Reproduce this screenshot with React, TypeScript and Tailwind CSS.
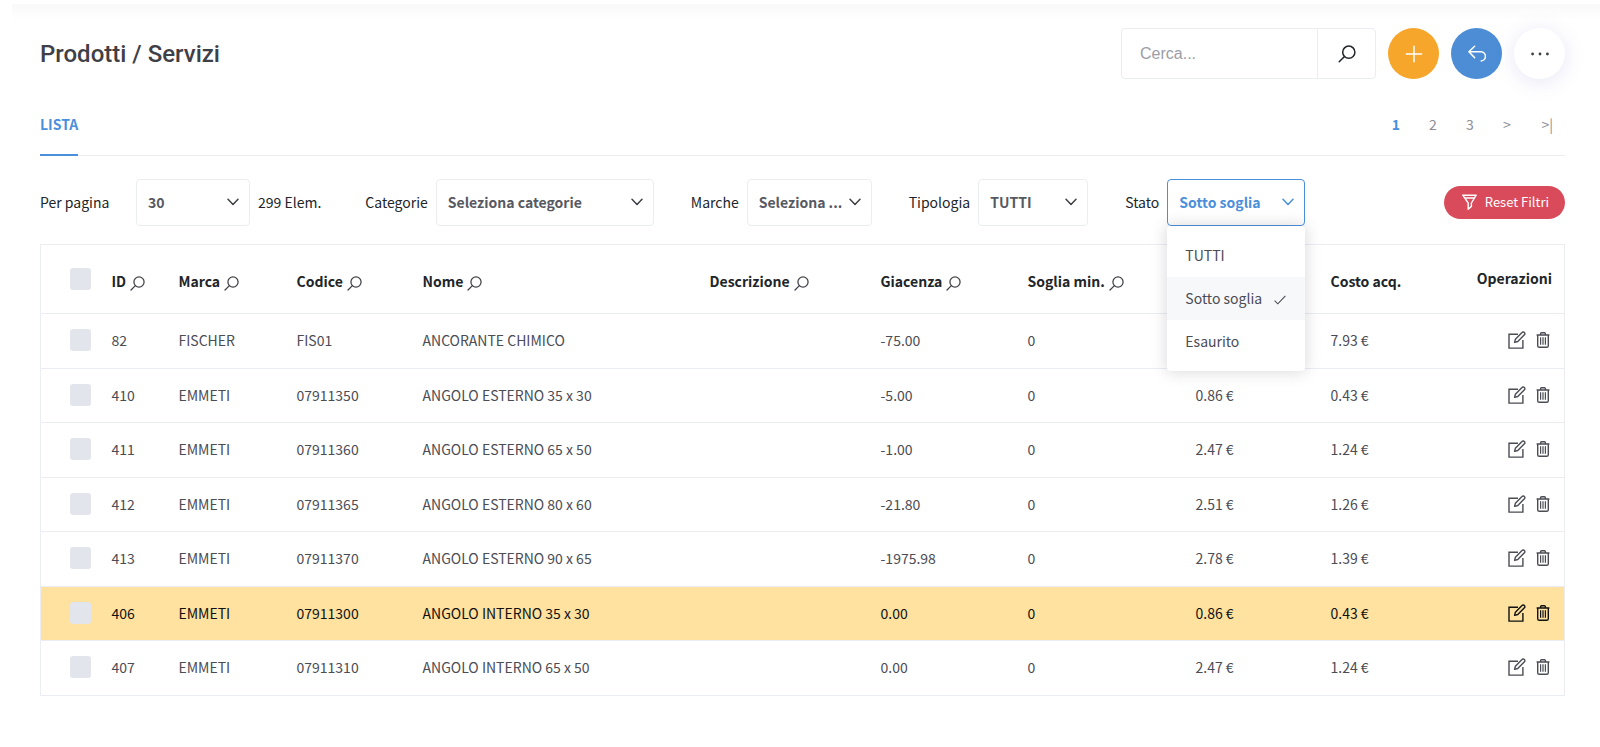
import { useState } from "react";
import type { JSX, ReactNode } from "react";

type Product = {
    id: number;
    brand: string;
    code: string;
    name: string;
    stock: string;
    minStock: string;
    price?: string;
    cost: string;
    highlighted?: boolean;
};

const products: Product[] = [
    { id: 82, brand: "FISCHER", code: "FIS01", name: "ANCORANTE CHIMICO", stock: "-75.00", minStock: "0", cost: "7.93 €" },
    { id: 410, brand: "EMMETI", code: "07911350", name: "ANGOLO ESTERNO 35 x 30", stock: "-5.00", minStock: "0", price: "0.86 €", cost: "0.43 €" },
    { id: 411, brand: "EMMETI", code: "07911360", name: "ANGOLO ESTERNO 65 x 50", stock: "-1.00", minStock: "0", price: "2.47 €", cost: "1.24 €" },
    { id: 412, brand: "EMMETI", code: "07911365", name: "ANGOLO ESTERNO 80 x 60", stock: "-21.80", minStock: "0", price: "2.51 €", cost: "1.26 €" },
    { id: 413, brand: "EMMETI", code: "07911370", name: "ANGOLO ESTERNO 90 x 65", stock: "-1975.98", minStock: "0", price: "2.78 €", cost: "1.39 €" },
    { id: 406, brand: "EMMETI", code: "07911300", name: "ANGOLO INTERNO 35 x 30", stock: "0.00", minStock: "0", price: "0.86 €", cost: "0.43 €", highlighted: true },
    { id: 407, brand: "EMMETI", code: "07911310", name: "ANGOLO INTERNO 65 x 50", stock: "0.00", minStock: "0", price: "2.47 €", cost: "1.24 €" },
];

const stati = ["TUTTI", "Sotto soglia", "Esaurito"];

const SearchIcon = ({ className }: { className: string }): JSX.Element => (
    <svg viewBox="0 0 18 18" className={className} fill="none" stroke="currentColor" strokeWidth="1.5" strokeLinecap="round" aria-hidden="true">
        <circle cx="10.8" cy="7.2" r="6.1" />
        <path d="M6.5 11.5 1.2 16.8" />
    </svg>
);

const ChevronIcon = ({ className }: { className: string }): JSX.Element => (
    <svg viewBox="0 0 12 8" className={className} fill="none" stroke="currentColor" strokeWidth="1.5" strokeLinecap="round" strokeLinejoin="round" aria-hidden="true">
        <path d="M1 1.2 6 6.4l5-5.2" />
    </svg>
);

const EditIcon = (): JSX.Element => (
    <svg viewBox="0 0 18 18" className="size-[18px]" fill="none" stroke="currentColor" strokeWidth="1.4" aria-hidden="true">
        <path d="M10 3.2H1v13.9h13.9V9" />
        <path d="M7.4 8.2 14 1.5a1.6 1.6 0 0 1 2.4 0 1.6 1.6 0 0 1 0 2.3l-6.6 6.7-3.2.9z" strokeLinejoin="round" />
    </svg>
);

const TrashIcon = (): JSX.Element => (
    <svg viewBox="0 0 14 16" className="h-4 w-3.5" fill="none" stroke="currentColor" strokeWidth="1.4" aria-hidden="true">
        <path d="M.6 3h12.8M4.6 3V1.8q0-1 1-1h2.8q1 0 1 1V3M1.7 3v10.7q0 1.6 1.6 1.6h7.4q1.6 0 1.6-1.6V3" />
        <path d="M4.6 5.3v7.5M7 5.3v7.5M9.4 5.3v7.5" strokeWidth="1.2" />
    </svg>
);

type FilterSelectProps = {
    id: string;
    options: string[];
    width: string;
    active?: boolean;
    value?: string;
    onToggle?: () => void;
    children?: ReactNode;
};

const FilterSelect = ({ id, options, width, active, value, onToggle, children }: FilterSelectProps): JSX.Element => (
    <div className={`relative ${width}`}>
        <select
            id={id}
            value={value ?? options[0]}
            onChange={() => undefined}
            onMouseDown={(e) => {
                if (onToggle) {
                    e.preventDefault();
                    onToggle();
                }
            }}
            className={`block h-[47px] w-full appearance-none rounded-sm border bg-white pb-0.5 pl-[11px] pr-6 text-[14px] font-bold outline-none ${active ? "border-[#4a8fdc] text-[#4a8fdc]" : "border-[#ebedf2] text-[#575962]"}`}
        >
            {options.map((option) => (
                <option key={option}>{option}</option>
            ))}
        </select>
        <ChevronIcon className={`pointer-events-none absolute right-[11px] top-[19px] h-2 w-3 ${active ? "text-[#4a8fdc]" : "text-[#3f4047]"}`} />
        {children}
    </div>
);

const HeaderCell = ({ label, search }: { label: string; search?: boolean }): JSX.Element => (
    <th scope="col" className="pl-[9px] pt-1 text-left font-bold">
        <span className="flex items-center gap-1">
            {label}
            {search && (
                <button type="button" aria-label={`Cerca ${label}`} className="text-[#3f4047]">
                    <SearchIcon className="mt-1 size-[15px]" />
                </button>
            )}
        </span>
    </th>
);

const checkboxClass = "block h-[22px] w-[21px] appearance-none rounded-[3px] bg-[#e2e5ec] checked:bg-[#4a8fdc]";

const cellClass = "pb-0.5 pl-[9px]";

export default function App(): JSX.Element {
    const [stato, setStato] = useState("Sotto soglia");
    const [menuOpen, setMenuOpen] = useState(true);

    const rows = products.map((product) => {
        const rowColor = product.highlighted ? "bg-[#ffe29f] text-[#111111]" : "text-[#4b4c54]";
        return (
            <tr key={product.id} className={`border-t border-[#ebedf2] odd:h-[55px] even:h-[54px] ${rowColor}`}>
                <td className="pb-0.5 pl-[29px]">
                    <input type="checkbox" aria-label={`Seleziona ${product.id}`} className={checkboxClass} />
                </td>
                <td className={cellClass}>{product.id}</td>
                <td className={cellClass}>{product.brand}</td>
                <td className={cellClass}>{product.code}</td>
                <td className={cellClass}>{product.name}</td>
                <td className={cellClass}></td>
                <td className={cellClass}>{product.stock}</td>
                <td className={cellClass}>{product.minStock}</td>
                <td className={cellClass}>{product.price}</td>
                <td className={cellClass}>{product.cost}</td>
                <td className="pb-0.5 pr-3.5">
                    <div className="flex items-center justify-end gap-2.5">
                        <button type="button" aria-label="Modifica"><EditIcon /></button>
                        <button type="button" aria-label="Elimina"><TrashIcon /></button>
                    </div>
                </td>
            </tr>
        );
    });

    return (
        <div className="min-h-screen bg-white pt-1 font-['Noto_Sans_CJK_SC',sans-serif] text-[14px] leading-5 text-[#212529]">
            <div className="ml-3 h-4 bg-linear-to-b from-[#f9f9f9] to-white"></div>
            <div className="pb-12 pl-10 pr-[35px]">
                <header className="mt-2 flex items-center justify-between">
                    <h1 className="font-['Roboto',sans-serif] text-2xl font-medium text-[#3f4047]">Prodotti / Servizi</h1>
                    <div className="flex items-center gap-3">
                        <form className="flex h-[51px] w-[255px] rounded-sm border border-[#ebedf2]" onSubmit={(e) => e.preventDefault()}>
                            <input
                                type="text"
                                aria-label="Cerca"
                                placeholder="Cerca..."
                                className="min-w-0 flex-1 pl-[18px] font-['Liberation_Sans',sans-serif] text-base outline-none placeholder:text-[#9c9da6]"
                            />
                            <button type="submit" aria-label="Avvia ricerca" className="flex w-[58px] items-center justify-center border-l border-[#ebedf2]">
                                <SearchIcon className="size-[18px]" />
                            </button>
                        </form>
                        <button type="button" aria-label="Aggiungi" className="flex size-[51px] items-center justify-center rounded-full bg-[#f6a62a] text-white">
                            <svg viewBox="0 0 18 18" className="size-[18px]" fill="none" stroke="currentColor" strokeWidth="1.5" aria-hidden="true">
                                <path d="M9 .8v16.4M.8 9h16.4" />
                            </svg>
                        </button>
                        <button type="button" aria-label="Indietro" className="flex size-[51px] items-center justify-center rounded-full bg-[#4c8dd6] text-white">
                            <svg viewBox="0 0 18 18" className="size-[18px]" fill="none" stroke="currentColor" strokeWidth="1.5" strokeLinecap="round" strokeLinejoin="round" aria-hidden="true">
                                <path d="M6.6 1.2.9 6.8l5.7 5.8M1.2 6.8h11.2a4.6 4.6 0 0 1 .8 9.2" />
                            </svg>
                        </button>
                        <button type="button" aria-label="Altro" className="flex size-[51px] items-center justify-center rounded-full bg-white text-[#3f4047] shadow-[0_3px_20px_0_rgba(113,106,202,0.17)]">
                            <svg viewBox="0 0 18 4" className="h-1 w-[18px]" fill="currentColor" aria-hidden="true">
                                <circle cx="1.6" cy="2" r="1.4" />
                                <circle cx="9" cy="2" r="1.4" />
                                <circle cx="16.4" cy="2" r="1.4" />
                            </svg>
                        </button>
                    </div>
                </header>

                <div className="mt-4 flex justify-between border-b border-[#ebedf2]">
                    <a href="#lista" className="-mb-px border-b-2 border-[#4a8fdc] pb-5 pt-[19px] font-bold text-[#4a8fdc]">LISTA</a>
                    <nav aria-label="Pagine" className="flex pt-[19px] text-[#8b8c96]">
                        <a href="#1" className="w-[37px] text-center font-bold text-[#4a8fdc]">1</a>
                        <a href="#2" className="w-[37px] text-center">2</a>
                        <a href="#3" className="w-[37px] text-center">3</a>
                        <a href="#next" className="w-[37px] text-center">&gt;</a>
                        <a href="#last" className="pl-4 pr-3">&gt;|</a>
                    </nav>
                </div>

                <div className="mt-[23px] flex items-center justify-between">
                    <div className="flex items-center">
                        <div className="mr-11 flex items-center gap-2">
                            <label htmlFor="perPage" className="w-[88px] pb-0.5">Per pagina</label>
                            <FilterSelect id="perPage" options={["30"]} width="w-[114px]" />
                            <span className="pb-0.5">299 Elem.</span>
                        </div>
                        <div className="mr-[37px] flex items-center gap-2">
                            <label htmlFor="categorie" className="pb-0.5">Categorie</label>
                            <FilterSelect id="categorie" options={["Seleziona categorie"]} width="w-[218px]" />
                        </div>
                        <div className="mr-[37px] flex items-center gap-2">
                            <label htmlFor="marche" className="pb-0.5">Marche</label>
                            <FilterSelect id="marche" options={["Seleziona ..."]} width="w-[125px]" />
                        </div>
                        <div className="mr-[37px] flex items-center gap-2">
                            <label htmlFor="tipologia" className="pb-0.5">Tipologia</label>
                            <FilterSelect id="tipologia" options={["TUTTI"]} width="w-[110px]" />
                        </div>
                        <div className="flex items-center gap-2">
                            <label htmlFor="stato" className="pb-0.5">Stato</label>
                            <FilterSelect id="stato" options={stati} width="w-[138px]" active value={stato} onToggle={() => setMenuOpen(!menuOpen)}>
                                {menuOpen && (
                                    <ul className="absolute inset-x-0 top-full z-10 rounded-sm bg-white py-2 text-[#4b4c54] shadow-[0_0_15px_1px_rgba(69,65,78,0.2)]">
                                        {stati.map((option) => (
                                            <li key={option}>
                                                <button
                                                    type="button"
                                                    onClick={() => {
                                                        setStato(option);
                                                        setMenuOpen(false);
                                                    }}
                                                    className={`flex h-[43px] w-full items-center justify-between pb-0.5 pl-[18px] pr-[19px] ${option === stato ? "bg-[#f7f8fa]" : ""}`}
                                                >
                                                    {option}
                                                    {option === stato && (
                                                        <svg viewBox="0 0 12 10" className="mt-1 h-2.5 w-3" fill="none" stroke="currentColor" strokeWidth="1.1" aria-hidden="true">
                                                            <path d="m.6 5.6 3.2 3.2L11.4.8" />
                                                        </svg>
                                                    )}
                                                </button>
                                            </li>
                                        ))}
                                    </ul>
                                )}
                            </FilterSelect>
                        </div>
                    </div>
                    <button type="button" className="flex h-[33px] items-center gap-2 rounded-full bg-[#d94b5b] pb-px pl-[18px] pr-4 text-[13px] text-white">
                        <svg viewBox="0 0 15 16" className="h-4 w-[15px]" fill="none" stroke="currentColor" strokeWidth="1.4" strokeLinejoin="round" aria-hidden="true">
                            <path d="M.8 1.2h13.4L9.4 9v3.4L6.2 15.2V9zM2.6 4h9.8" />
                        </svg>
                        Reset Filtri
                    </button>
                </div>

                <table className="mt-[18px] w-full table-fixed border-collapse border border-[#ebedf2]">
                    <colgroup>
                        <col className="w-[62px]" />
                        <col className="w-[67px]" />
                        <col className="w-[118px]" />
                        <col className="w-[126px]" />
                        <col className="w-[287px]" />
                        <col className="w-[171px]" />
                        <col className="w-[147px]" />
                        <col className="w-[168px]" />
                        <col className="w-[135px]" />
                        <col className="w-[140px]" />
                        <col />
                    </colgroup>
                    <thead>
                        <tr className="h-[69px]">
                            <th scope="col" className="pl-[29px]">
                                <input type="checkbox" aria-label="Seleziona tutti" className={checkboxClass} />
                            </th>
                            <HeaderCell label="ID" search />
                            <HeaderCell label="Marca" search />
                            <HeaderCell label="Codice" search />
                            <HeaderCell label="Nome" search />
                            <HeaderCell label="Descrizione" search />
                            <HeaderCell label="Giacenza" search />
                            <HeaderCell label="Soglia min." search />
                            <HeaderCell label="" />
                            <HeaderCell label="Costo acq." />
                            <th scope="col" className="pb-0.5 pr-3 text-right font-bold">Operazioni</th>
                        </tr>
                    </thead>
                    <tbody>
                        {rows}
                    </tbody>
                </table>
            </div>
        </div>
    );
}
